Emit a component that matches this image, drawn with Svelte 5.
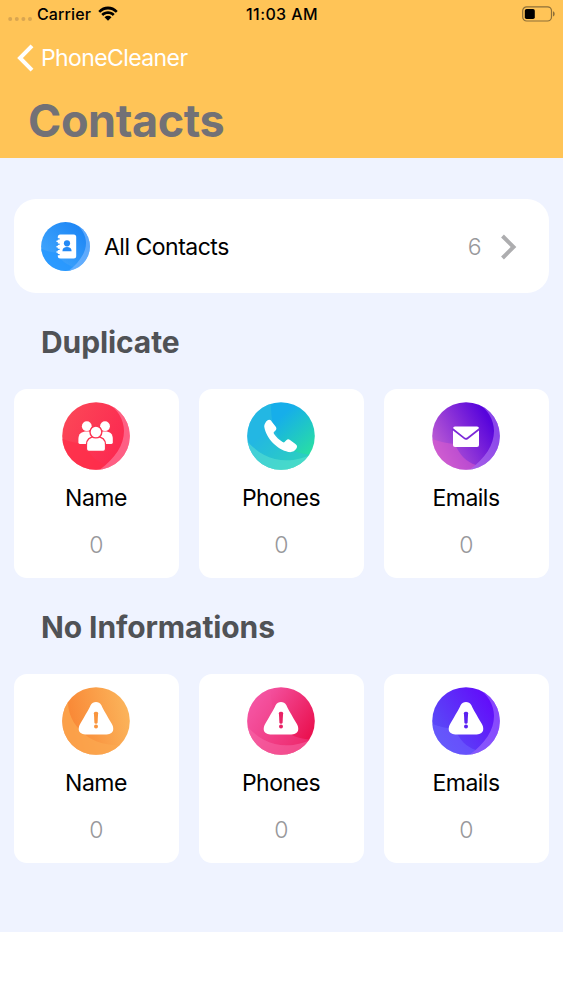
<script lang="ts">
  type Art = 'people' | 'phone' | 'mail' | 'alert';

  interface Tile {
    id: string;
    label: string;
    count: number;
    art: Art;
    /** Gradient stops, start to end. */
    from: string;
    to: string;
    /** Gradient direction: x1, y1, x2, y2. */
    dir: [number, number, number, number];
    /** Colour of the marks cut into the white glyph. */
    mark: string;
    /** Lighter swooshes painted over the disc. */
    blades: { d: string; fill: string; opacity: number }[];
  }

  interface Section {
    title: string;
    tiles: Tile[];
  }

  const RIGHT_BLADE = 'M44 -1C55 7 62 17 62 29C62 43 53 57 36 69H70V-1Z';
  const LEFT_BLADE = 'M-2 36C6 39 14 41.5 23 42C27 52 34 60 44 63L36 70H-2Z';
  const TOP_LEFT_BLADE = 'M25 -2C22 14 27 33 39 44C46 50 54 52.5 70 53V70H-2V-2Z';
  const BOTTOM_BLADE = 'M-2 36C5 46 16 54 28 57C41 60 54 58 70 50V70H-2Z';

  const sections: Section[] = [
    {
      title: 'Duplicate',
      tiles: [
        {
          id: 'dup-name',
          label: 'Name',
          count: 0,
          art: 'people',
          from: '#fb4a58',
          to: '#fc2850',
          dir: [0, 0, 1, 0.5],
          mark: '#fc3452',
          blades: [
            { d: LEFT_BLADE, fill: '#ff2e48', opacity: 0.7 },
            { d: RIGHT_BLADE, fill: '#ff84a6', opacity: 0.6 },
          ],
        },
        {
          id: 'dup-phones',
          label: 'Phones',
          count: 0,
          art: 'phone',
          from: '#16aeea',
          to: '#28dda6',
          dir: [0.4, 0.3, 0.85, 0.8],
          mark: '#16aeea',
          blades: [
            { d: TOP_LEFT_BLADE, fill: '#2fbfdc', opacity: 0.5 },
            { d: BOTTOM_BLADE, fill: '#62e6d2', opacity: 0.5 },
          ],
        },
        {
          id: 'dup-emails',
          label: 'Emails',
          count: 0,
          art: 'mail',
          from: '#bf5fd3',
          to: '#5704dc',
          dir: [0, 0.65, 0.8, 0.2],
          mark: '#7b28d8',
          blades: [
            { d: LEFT_BLADE, fill: '#df5bcb', opacity: 0.5 },
            { d: RIGHT_BLADE, fill: '#b780f5', opacity: 0.55 },
          ],
        },
      ],
    },
    {
      title: 'No Informations',
      tiles: [
        {
          id: 'none-name',
          label: 'Name',
          count: 0,
          art: 'alert',
          from: '#f98735',
          to: '#fbb35a',
          dir: [0.1, 0.5, 0.95, 0.3],
          mark: '#f9953e',
          blades: [
            {
              d: 'M8 4C3 18 8 34 19 44C31 56 47 60 66 57L58 70H-2V-2Z',
              fill: '#fba850',
              opacity: 0.75,
            },
          ],
        },
        {
          id: 'none-phones',
          label: 'Phones',
          count: 0,
          art: 'alert',
          from: '#f458a8',
          to: '#ea1250',
          dir: [0.1, 0.2, 0.9, 0.75],
          mark: '#e82265',
          blades: [
            { d: TOP_LEFT_BLADE, fill: '#f4509a', opacity: 0.4 },
            { d: BOTTOM_BLADE, fill: '#f76ca9', opacity: 0.5 },
          ],
        },
        {
          id: 'none-emails',
          label: 'Emails',
          count: 0,
          art: 'alert',
          from: '#5950f7',
          to: '#6307fa',
          dir: [0, 0.7, 0.9, 0.1],
          mark: '#5b22f0',
          blades: [
            { d: LEFT_BLADE, fill: '#6f62ff', opacity: 0.55 },
            { d: RIGHT_BLADE, fill: '#a170ff', opacity: 0.6 },
          ],
        },
      ],
    },
  ];

  const contactTotal = 6;
</script>

<div class="screen">
  <header class="header">
    <div class="status">
      <div class="carrier">
        <svg class="signal" viewBox="0 0 24 6" aria-hidden="true">
          <circle cx="2.2" cy="3" r="2" />
          <circle cx="8.8" cy="3" r="2" />
          <circle cx="15.4" cy="3" r="2" />
          <circle cx="22" cy="3" r="2" />
        </svg>
        <span class="carrier-name">Carrier</span>
        <svg class="wifi" viewBox="0 0 20 15" aria-hidden="true">
          <path d="M.3 4.9C5.7-.8 14.3-.8 19.7 4.9L17.9 6.8C13.4 2.3 6.6 2.3 2.1 6.8Z" />
          <path d="M3.3 8C7 4.3 13 4.3 16.7 8L14.8 9.9C12.1 7.3 7.9 7.3 5.2 9.9Z" />
          <path d="M6.5 11.2C8.5 9.4 11.5 9.4 13.5 11.2L10 14.7Z" />
        </svg>
      </div>
      <span class="time">11:03 AM</span>
      <svg class="battery" viewBox="0 0 34 16" aria-hidden="true">
        <rect x=".7" y=".8" width="28.8" height="14.2" rx="4" class="shell" />
        <rect x="2.8" y="3" width="10" height="10" rx="1.8" />
        <path d="M31 5.3C33.2 6.1 33.2 9.7 31 10.5Z" class="cap" />
      </svg>
    </div>
    <button class="back" type="button">
      <svg viewBox="0 0 18 28" aria-hidden="true">
        <path d="M16 1.8L4 14L16 26.2" />
      </svg>
      <span>PhoneCleaner</span>
    </button>
    <h1>Contacts</h1>
  </header>

  <main>
    <button class="all" type="button">
      <svg class="book" viewBox="0 0 49 49" aria-hidden="true">
        <defs>
          <linearGradient id="g-book" x1="0" y1="1" x2="1" y2="0">
            <stop offset="0" stop-color="#4aaeff" />
            <stop offset="1" stop-color="#157ff3" />
          </linearGradient>
          <clipPath id="c-book"><circle cx="24.5" cy="24.5" r="24.4" /></clipPath>
        </defs>
        <g clip-path="url(#c-book)">
          <rect width="49" height="49" fill="url(#g-book)" />
          <path
            d="M-1 26C5 29 10 30.5 16 30.5C19 38 25 43 33 45L28 50H-1Z"
            fill="#2495ff"
            opacity=".7"
          />
          <path
            d="M32 -1C40 5 45 13 45 21C45 31 38 41 26 50H50V-1Z"
            fill="#7db9ff"
            opacity=".65"
          />
        </g>
        <rect x="16.8" y="12.4" width="18.4" height="24" rx="2.5" fill="#fff" />
        <g fill="none" stroke="#2691fb" stroke-width="1.3">
          <path d="M15.6 16.9H18.6" />
          <path d="M15.6 22.2H18.6" />
          <path d="M15.6 27.4H18.6" />
          <path d="M15.6 32.6H18.6" />
        </g>
        <g fill="none" stroke="#fff" stroke-width="1.5" stroke-linecap="round">
          <path d="M16 19.2H19" />
          <path d="M16 24.7H19" />
          <path d="M16 30.1H19" />
        </g>
        <circle cx="26" cy="21.3" r="3.1" fill="#2389f5" />
        <path d="M21.4 29.2C21.4 26.2 23.2 25 26 25S30.6 26.2 30.6 29.2Z" fill="#2389f5" />
      </svg>
      <span class="all-label">All Contacts</span>
      <span class="all-count">{contactTotal}</span>
      <svg class="chevron" viewBox="0 0 17 26" aria-hidden="true">
        <path d="M2.5 2L13.5 13L2.5 24" />
      </svg>
    </button>

    {#each sections as section (section.title)}
      <h2>{section.title}</h2>
      <div class="grid">
        {#each section.tiles as tile (tile.id)}
          <button class="tile" type="button">
            <svg class="disc" viewBox="0 0 68 68" aria-hidden="true">
              <defs>
                <linearGradient
                  id="g-{tile.id}"
                  x1={tile.dir[0]}
                  y1={tile.dir[1]}
                  x2={tile.dir[2]}
                  y2={tile.dir[3]}
                >
                  <stop offset="0" stop-color={tile.from} />
                  <stop offset="1" stop-color={tile.to} />
                </linearGradient>
                <clipPath id="c-{tile.id}"><circle cx="34" cy="34" r="33.8" /></clipPath>
              </defs>
              <g clip-path="url(#c-{tile.id})">
                <rect width="68" height="68" fill="url(#g-{tile.id})" />
                {#each tile.blades as blade}
                  <path d={blade.d} fill={blade.fill} opacity={blade.opacity} />
                {/each}
              </g>
              {#if tile.art === 'people'}
                <g fill="#fff">
                  <circle cx="24.8" cy="24.2" r="4.9" />
                  <circle cx="43" cy="24.2" r="4.9" />
                  <path d="M16.4 40.6V37C16.4 32 19.5 29.6 24.8 29.6S33 32 33 37V42H17.8Q16.4 42 16.4 40.6Z" />
                  <path d="M34.6 42V37C34.6 32 37.7 29.6 42.9 29.6S50.8 32 50.8 37V40.6Q50.8 42 49.4 42Z" />
                  <g stroke={tile.mark} stroke-width="1.4">
                    <path
                      d="M24.4 47V43C24.4 37.4 28 34.6 33.9 34.6S43.6 37.4 43.6 43V47Q43.6 49.4 41.2 49.4H26.8Q24.4 49.4 24.4 47Z"
                    />
                    <circle cx="33.9" cy="30" r="5.9" />
                  </g>
                </g>
              {:else if tile.art === 'phone'}
                <path
                  fill="#fff"
                  d="M18.6 20.4C19.6 18.9 21 17.9 22.2 17.8C23.4 17.8 24.2 18.7 25 20L28.6 24.6C29.8 26.3 29.6 27.8 28.3 28.8L27.2 29.8C26.5 30.5 26.5 31.1 27.1 32C29.3 35.2 32.2 37.9 35.6 40C36.6 40.6 37.2 40.5 37.8 39.8L39.3 38.3C40.4 37.1 41.7 37.1 43 37.9L48.4 42C50.2 43.3 50.5 44.8 49.4 46.6C47.7 49.4 44.8 50.6 41.3 50C30.4 47.7 19.3 36.5 17.4 25.6C17 23.5 17.5 21.9 18.6 20.4Z"
                />
              {:else if tile.art === 'mail'}
                <rect x="21" y="24.4" width="26" height="20.6" rx="2" fill="#fff" />
                <path
                  d="M20.6 27L32.2 36.2Q33.9 37.5 35.6 36.2L47.4 27"
                  fill="none"
                  stroke={tile.mark}
                  stroke-width="1.7"
                />
              {:else}
                <path
                  fill="#fff"
                  d="M28.6 18.2C31 14 37 14 39.4 18.2C41.3 22.6 44.6 27.9 49.6 36.4C52.1 40.8 51.6 44.2 49.3 46Q47.7 47.4 44.7 47.4H23.2Q20.3 47.4 18.7 46C16.4 44.2 15.9 40.8 18.4 36.4C23.4 27.9 26.7 22.6 28.6 18.2Z"
                />
                <g fill={tile.mark}>
                  <path d="M31.9 26.2Q31.9 24.8 34 24.8T36.1 26.2L35.6 35.2Q35.5 36.7 34 36.7T32.4 35.2Z" />
                  <circle cx="34" cy="39.5" r="2" />
                </g>
              {/if}
            </svg>
            <span class="tile-label">{tile.label}</span>
            <span class="tile-count">{tile.count}</span>
          </button>
        {/each}
      </div>
    {/each}
  </main>
</div>

<style>
  :global(body) {
    margin: 0;
    background: #fff;
  }

  .screen {
    width: 563px;
    height: 1000px;
    overflow: hidden;
    background: #fff;
    font-family: Inter, 'Liberation Sans', sans-serif;
    color: #000;
  }

  button {
    margin: 0;
    border: 0;
    font: inherit;
    color: inherit;
    text-align: left;
    cursor: pointer;
  }

  svg {
    display: block;
    flex: none;
  }

  .header {
    box-sizing: border-box;
    height: 158px;
    background: #ffc457;
  }

  .status {
    display: grid;
    grid-template-columns: 1fr auto 1fr;
    align-items: center;
    height: 27px;
    padding: 0 7px 0 8px;
    font-size: 16px;
    font-weight: 500;
  }

  .carrier {
    display: flex;
    align-items: center;
  }

  .signal {
    width: 24px;
    height: 6px;
    margin-top: 10px;
    fill: #d9a550;
  }

  .carrier-name {
    margin-left: 5px;
    letter-spacing: 0.1px;
  }

  .time {
    letter-spacing: 0.4px;
  }

  .wifi {
    width: 20px;
    height: 15px;
    margin-left: 7px;
  }

  .battery {
    justify-self: end;
    width: 34px;
    height: 16px;
  }

  .shell {
    fill: none;
    stroke: #8d6f38;
    stroke-width: 1.2;
  }

  .cap {
    fill: #8d6f38;
  }

  .back {
    display: flex;
    align-items: center;
    height: 61px;
    padding: 0 0 0 16px;
    background: none;
    color: #fff;
    font-size: 23px;
    letter-spacing: -0.6px;
  }

  .back svg {
    width: 18px;
    height: 28px;
    margin-right: 7px;
    fill: none;
    stroke: #fff;
    stroke-width: 4;
  }

  h1 {
    margin: 3px 0 0 28px;
    font-size: 45px;
    line-height: 60px;
    font-weight: 700;
    letter-spacing: -0.4px;
    color: #727176;
  }

  main {
    box-sizing: border-box;
    height: 774px;
    padding: 41px 14px 0;
    background: #eff3ff;
  }

  .all {
    box-sizing: border-box;
    display: flex;
    align-items: center;
    width: 535px;
    height: 94px;
    padding: 1px 32px 0 27px;
    border-radius: 22px;
    background: #fff;
    font-size: 23px;
    letter-spacing: -0.5px;
  }

  .book {
    width: 49px;
    height: 49px;
  }

  .all-label {
    margin-left: 14px;
  }

  .all-count {
    margin-left: auto;
    font-weight: 300;
    color: #98989b;
  }

  .chevron {
    width: 17px;
    height: 26px;
    margin-left: 19px;
    fill: none;
    stroke: #adadaf;
    stroke-width: 4;
  }

  h2 {
    margin: 0 0 0 27px;
    padding-top: 2px;
    font-size: 30px;
    line-height: 94px;
    font-weight: 700;
    letter-spacing: -0.1px;
    color: #505256;
  }

  .grid {
    display: grid;
    grid-template-columns: repeat(3, 165px);
    justify-content: space-between;
  }

  .tile {
    box-sizing: border-box;
    display: flex;
    flex-direction: column;
    align-items: center;
    height: 189px;
    padding: 13px 1px 0 0;
    border-radius: 13px;
    background: #fff;
    font-size: 23px;
    line-height: 28px;
    letter-spacing: -0.5px;
  }

  .disc {
    width: 68px;
    height: 68px;
  }

  .tile-label {
    margin-top: 14px;
  }

  .tile-count {
    margin-top: 19px;
    font-weight: 300;
    color: #98989b;
  }
</style>
